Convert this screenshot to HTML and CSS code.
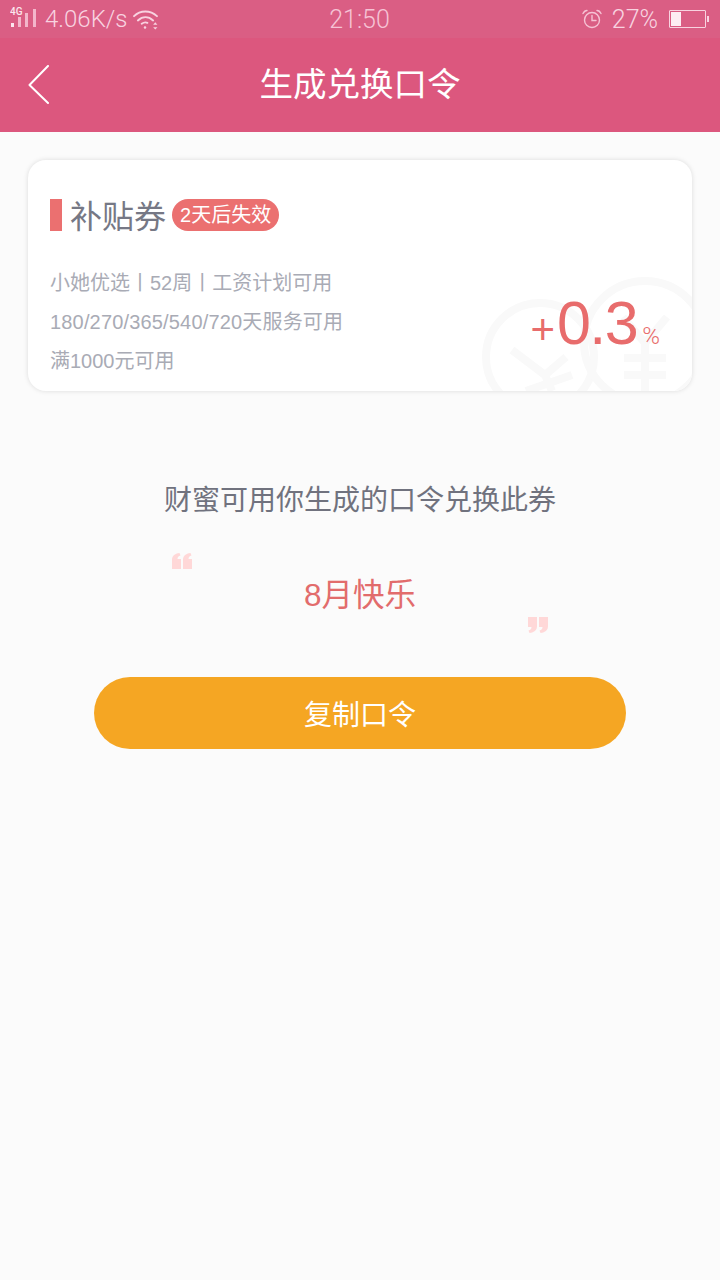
FILE: index.html
```html
<!DOCTYPE html>
<html lang="zh">
<head>
<meta charset="utf-8">
<title>生成兑换口令</title>
<link rel="stylesheet" href="styles.css">
</head>
<body>
<header class="header">
  <div class="status">
    <div class="status-left">
      <svg class="signal" width="28" height="24" viewBox="0 0 28 24">
        <text x="0" y="8" class="signal-text">4G</text>
        <rect x="1" y="16" width="3" height="4" fill="#fbe6ee"/>
        <rect x="8" y="10" width="3" height="10" fill="#f3b6cb"/>
        <rect x="15" y="6" width="3" height="14" fill="#f3b6cb"/>
        <rect x="23" y="2" width="3" height="18" fill="#f3b6cb"/>
      </svg>
      <span class="speed">4.06K/s</span>
      <svg class="wifi" width="25" height="21" viewBox="0 0 26 22" fill="none" stroke="#f8d3e0" stroke-width="2" stroke-linecap="round">
        <path d="M1 7.500C7.500 1 18 1 25 7.500"/>
        <path d="M5 12C10 7.500 16 7.500 21 12"/>
        <path d="M9 15.500C11 14 13 13.500 15 14.500"/>
        <circle cx="12.500" cy="19.500" r="1.300" fill="#f8d3e0" stroke="none"/>
        <path d="M21 16.500h4.500l-2.250-2.500zM21 19h4.500l-2.250 2.500z" fill="#f8d3e0" stroke="none"/>
      </svg>
    </div>
    <span class="clock">21:50</span>
    <div class="status-right">
      <svg class="alarm" width="20" height="20" viewBox="0 0 20 20" fill="none" stroke="#f6c3d5" stroke-width="1.400" stroke-linecap="round">
        <circle cx="10" cy="11" r="7.500"/>
        <path d="M10 6.500V11.500H14"/>
        <path d="M1 4.500C2 2.500 3.500 1.500 5 1.500M19 4.500C18 2.500 16.500 1.500 15 1.500"/>
      </svg>
      <span class="percent">27%</span>
      <div class="battery">
        <div class="battery-body"><div class="battery-fill" style="width:29%"></div></div>
        <div class="battery-tip"></div>
      </div>
    </div>
  </div>
  <div class="nav">
    <svg class="back" width="22" height="40" viewBox="0 0 22 40" fill="none" stroke="#fff" stroke-width="2" stroke-linecap="round" stroke-linejoin="round">
      <path d="M20 1L1.500 20L20 38"/>
    </svg>
    <h1 class="title">生成兑换口令</h1>
  </div>
</header>

<main class="main">
  <section class="card">
    <svg class="watermark" width="212" height="116" viewBox="0 0 212 116" fill="none" stroke="#f9f9f9" stroke-width="8">
      <circle cx="60" cy="82" r="54"/>
      <circle cx="165" cy="67" r="61"/>
      <path d="M32 75L65 100L86 82M65 100L72 116M46 116L92 100"/>
      <path d="M187 42L165 68L143 42M144 83H186M144 100H186M165 68V116"/>
    </svg>
    <div class="card-head">
      <span class="mark"></span>
      <h2 class="card-title">补贴券</h2>
      <span class="badge">2天后失效</span>
    </div>
    <ul class="rules">
      <li>小她优选丨52周丨工资计划可用</li>
      <li class="rule-wide">180/270/365/540/720天服务可用</li>
      <li>满1000元可用</li>
    </ul>
    <div class="rate"><span class="plus">+</span><span class="num">0.3</span><span class="pct">%</span></div>
  </section>

  <p class="hint">财蜜可用你生成的口令兑换此券</p>

  <div class="quote">
    <svg class="qmark qmark-open" width="20" height="16" viewBox="0 0 20 16" fill="#ffd8d8">
      <path d="M0 16V7C0 3 2.500 .5 7.500 0L8.500 2.500C6.500 3 5.500 4 5.500 6H9V16Z"/>
      <path d="M11 16V7C11 3 13.500 .5 18.500 0L19.500 2.500C17.500 3 16.500 4 16.500 6H20V16Z"/>
    </svg>
    <span class="code">8月快乐</span>
    <svg class="qmark qmark-close" width="20" height="16" viewBox="0 0 20 16" fill="#ffd8d8">
      <path d="M20 0V9C20 13 17.500 15.500 12.500 16L11.500 13.500C13.500 13 14.500 12 14.500 10H11V0Z"/>
      <path d="M9 0V9C9 13 6.500 15.500 1.500 16L.5 13.500C2.500 13 3.500 12 3.500 10H0V0Z"/>
    </svg>
  </div>

  <button class="copy">复制口令</button>
</main>
</body>
</html>
```

FILE: styles.css
```css
* { box-sizing: border-box; margin: 0; padding: 0; }
html, body { height: 100%; }
body {
  background: #fbfbfb;
  font-family: "Liberation Sans", "Noto Sans CJK SC", sans-serif;
  font-weight: 400;
  width: 720px;
  height: 1280px;
  overflow: hidden;
}
.header { background: #dc577e; height: 132px; }
.status {
  height: 38px;
  background: #da5e84;
  display: grid;
  grid-template-columns: 1fr auto 1fr;
  align-items: center;
  padding: 0 11px 0 10px;
  color: #f8d3e0;
  font-family: "Roboto", "Noto Sans CJK SC", sans-serif;
  font-weight: 300;
  font-size: 24px;
}
.status-left, .status-right { display: flex; align-items: center; }
.status-right { justify-content: flex-end; }
.signal-text { font-size: 10px; font-weight: 500; fill: #fbe6ee; font-family: "Roboto", sans-serif; }
.speed { margin-left: 7px; }
.wifi { margin-left: 5px; }
.clock { color: #f6c3d5; font-size: 25px; }
.percent { margin-left: 10px; font-size: 25px; }
.battery { display: flex; align-items: center; margin-left: 11px; }
.battery-body { width: 37px; height: 18px; border: 1px solid #f8d3e0; padding: 1px; border-radius: 1px; }
.battery-fill { height: 100%; background: #fdeef3; }
.battery-tip { width: 2px; height: 6px; background: #f8d3e0; margin-left: 1px; }
.nav { height: 94px; position: relative; display: flex; align-items: center; justify-content: center; }
.back { position: absolute; left: 28px; top: 27px; }
.title { font-size: 33.5px; font-weight: 400; color: #fff; line-height: 1; }
.main { display: flex; flex-direction: column; align-items: center; padding: 28px 28px 0; }
.card {
  position: relative;
  overflow: hidden;
  width: 664px;
  height: 231px;
  background: #fff;
  border-radius: 18px;
  box-shadow: 0 0 5px rgba(0,0,0,.13);
  padding: 39px 22px 0;
}
.watermark { position: absolute; right: 0; bottom: 0; }
.card-head { position: relative; display: flex; align-items: center; height: 32px; }
.mark { width: 12px; height: 32px; background: #eb7070; }
.card-title { font-size: 32px; font-weight: 400; color: #767885; margin-left: 8px; line-height: 36px; padding-top: 4px; }
.badge {
  margin-left: 6px; height: 32px; line-height: 32px; padding: 0 8px;
  background: #eb7070; color: #fff; border-radius: 16px; font-size: 20px; font-weight: 400;
}
.rules { position: relative; list-style: none; margin-top: 32px; font-size: 20px; color: #a9abb5; font-weight: 400; }
.rules li { height: 39px; line-height: 40px; }
.rules .rule-wide { letter-spacing: .17px; }
.rate { position: absolute; right: 32px; bottom: 37px; display: flex; align-items: baseline; color: #e86c6c; }
.plus { font-size: 42px; font-weight: 400; margin-right: 2px; }
.num { font-size: 61px; line-height: 1; letter-spacing: -1.500px; }
.pct { font-size: 24px; margin-left: 5px; font-family: "Roboto", sans-serif; font-weight: 300; }
.hint { margin-top: 91px; font-size: 28px; color: #70727e; font-weight: 400; line-height: 38px; }
.quote { position: relative; width: 376px; height: 106px; margin-top: 19px; display: flex; justify-content: center; align-items: center; }
.code { font-size: 31.5px; color: #e26c6c; font-weight: 400; }
.qmark { position: absolute; }
.qmark-open { left: 0; top: 14px; }
.qmark-close { right: 0; top: 78px; }
.copy {
  width: 532px; height: 72px; margin-top: 32px; border: 0; border-radius: 36px;
  background: #f5a623; color: #fff; font: 400 28px "Liberation Sans", "Noto Sans CJK SC", sans-serif;
}
```
